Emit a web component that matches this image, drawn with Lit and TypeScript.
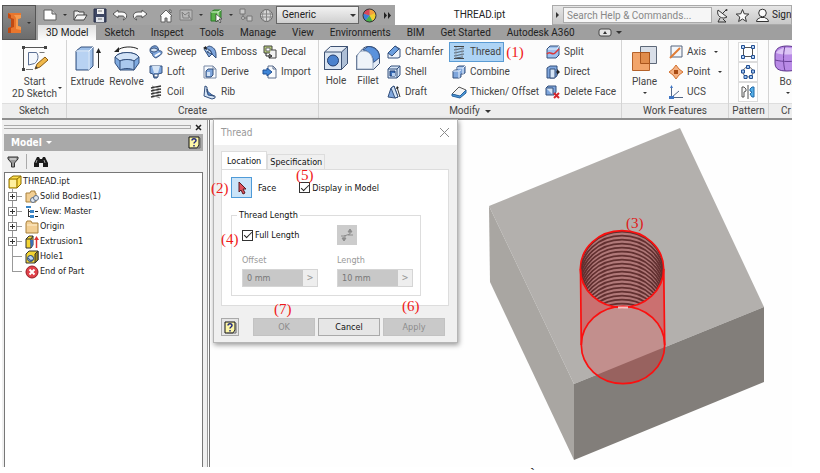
import { LitElement, html, css, svg, nothing } from "lit";
import { customElement, property } from "lit/decorators.js";
import { classMap } from "lit/directives/class-map.js";

const draw = (w: number, h: number, body: unknown) =>
  html`<svg width=${w} height=${h} viewBox="0 0 ${w} ${h}" aria-hidden="true">${body}</svg>`;

const LINE = "#34507c";
const PALE = "#d5e4f5";
const BLUE = "#7fa6dc";

const icons: Record<string, unknown> = {
  logo: draw(16, 22, svg`<path d="M1 1h13v5l-3 1v7l3 1v6H1v-5l3-1V7L1 6z" fill="#e8762d"/><path d="M1 1l3 2v3l3 1v8l-3 1v5H1v-5l3-1V7L1 6z" fill="#c04a12"/><path d="M7 3h7v3l-3 1v7l3 1v3l-5-1V6z" fill="#f59a4d"/>`),
  newDoc: draw(16, 14, svg`<path d="M2 2h8l4 4v6H2z" fill="#fff" stroke="#5c5c5c"/><path d="M10 2v4h4" fill="#ccc" stroke="#5c5c5c"/>`),
  open: draw(16, 14, svg`<path d="M2 12V3h4l1 1h5v3" fill="#eee" stroke="#444"/><path d="M2 12l3-5h10l-3 5z" fill="#f5f5f5" stroke="#444"/>`),
  save: draw(15, 15, svg`<path d="M1 1h12v13H1z" fill="#3e4763" stroke="#29304a"/><path d="M4 1h7v5H4z" fill="#f2f2f2"/><path d="M3 9h8v5H3z" fill="#dfe3ea"/><path d="M5 3h4M5 11h4" stroke="#777"/>`),
  undo: draw(16, 14, svg`<path d="M6 2L1 6l5 4V8h4c3 0 3 2 1 4 5-1 5-8-1-8H6z" fill="#fafafa" stroke="#555"/>`),
  redo: draw(16, 14, svg`<path d="M10 2l5 4-5 4V8H6c-3 0-3 2-1 4-5-1-5-8 1-8h4z" fill="#fafafa" stroke="#555"/>`),
  home: draw(16, 15, svg`<path d="M2 8l6-6 6 6h-1v6H9v-4H7v4H3V8z" fill="#fbfbfb" stroke="#606060"/><path d="M11 2h2v3l-2-2z" fill="#fff" stroke="#606060"/>`),
  material: draw(15, 14, svg`<path d="M1 2h12v10H1z" fill="#b9b9b9" stroke="#7e7e7e"/><path d="M3 4l3 3 4-3v6H4zM9 7l4 5" fill="none" stroke="#808080"/>`),
  select: draw(15, 15, svg`<path d="M2 4l3-2h7v8l-3 3H2z" fill="#58b048" stroke="#2b7a28"/><path d="M2 4h7v9M9 4l3-2" fill="none" stroke="#d6f2cf"/><path d="M7 6v8l2-2 2 3 1-1-2-3h3z" fill="#fff" stroke="#333" stroke-width=".7"/>`),
  nodes: draw(14, 14, svg`<path d="M4 4v6h5" fill="none" stroke="#777"/><g fill="#c8c8c8" stroke="#777"><path d="M1 1h5v5H1zM8 8h5v5H8z"/><circle cx="4" cy="10" r="1.5"/></g>`),
  sphere: draw(15, 15, svg`<circle cx="7.500" cy="7.500" r="6" fill="#d6d6d6" stroke="#666"/><path d="M2 6h11M2 9h11M5 2c-2 4-2 7 0 11M10 2c2 4 2 7 0 11M7.500 2v11" fill="none" stroke="#888"/>`),
  wheel: draw(15, 15, svg`<path d="M7.500 7.500V1a6.500 6.500 0 0 1 6 5z" fill="#f3a13a"/><path d="M7.500 7.500L13.500 5a6.500 6.500 0 0 1-3 8z" fill="#f0d030"/><path d="M7.500 7.500l3 6a6.500 6.500 0 0 1-7-1z" fill="#46b04a"/><path d="M7.500 7.500l-4 5a6.500 6.500 0 0 1-2-7z" fill="#3b7fd9"/><path d="M7.500 7.500L1.500 5.500A6.500 6.500 0 0 1 7.500 1z" fill="#d8455b"/><circle cx="7.500" cy="7.500" r="6.500" fill="none" stroke="#333"/>`),
  more: draw(9, 7, svg`<path d="M1 0l3 3.500L1 7zM5 0l3 3.500L5 7z" fill="#222"/>`),
  dish: draw(15, 15, svg`<path d="M3 2c-2 6 4 10 9 7z" fill="#eee" stroke="#333"/><path d="M7 6l4-4M5 10l-2 4h8l-3-3" fill="none" stroke="#333"/><circle cx="11.500" cy="2" r="1" fill="#333"/>`),
  star: draw(15, 15, svg`<path d="M7.500 1.500l1.700 4.300 4.600.3-3.600 2.900 1.200 4.500-3.900-2.500-3.900 2.500 1.200-4.500L1.200 6.100l4.600-.3z" fill="#fafafa" stroke="#333"/>`),
  person: draw(15, 15, svg`<path d="M1.500 13.500c0-3 3-3 4-4h4c1 1 4 1 4 4z" fill="#fafafa" stroke="#333"/><circle cx="7.500" cy="5" r="3.800" fill="#fafafa" stroke="#333"/>`),
  badge: draw(14, 9, svg`<rect x="1" y="1" width="12" height="7" rx="2" fill="#e6e6e6" stroke="#444"/><path d="M5 6l2-3 2 3z" fill="#333"/>`),

  sketch: draw(27, 27, svg`<path d="M2.500 2v22M2 2.500h22" stroke="#555"/><path d="M7.500 7.500h8c3 4 1 9-2 11l-6 1.500z" fill="#f5f8fc" stroke="#5b6f93"/><path d="M18.500 7.500h5M5 24.500h7" stroke="#777"/><g fill="#444"><path d="M1 1h3v3H1zM23 1h3v3h-3zM1 23h3v3H1z"/></g><path d="M14 24l2-5 8-7 3 3-8 7z" fill="#f0b84a" stroke="#8a5c14"/><path d="M14 24l1-3 2 2z" fill="#444"/>`),
  extrude: draw(28, 27, svg`<path d="M2 6l5-4h12v19l-4 4H2z" fill="#9dbfe9" stroke="${LINE}"/><path d="M2 6h13l4-4M15 6v19" fill="none" stroke="#f3f8fd"/><path d="M3 7h11v17H3z" fill="#b8d2f2"/><path d="M24.500 5v18" stroke="#333"/><path d="M22 8l2.500-5L27 8z" fill="#222"/>`),
  revolve: draw(28, 27, svg`<path d="M2 12c4-6 20-6 24 0v6l-5 7H7l-5-7z" fill="#7faae0" stroke="${LINE}"/><path d="M2 12c4-6 20-6 24 0l-5 4c-4-2-10-2-14 0z" fill="#d2e3f7" stroke="${LINE}"/><path d="M7 16c4-2 10-2 14 0v9c-4-2-10-2-14 0z" fill="#a9c8ee" stroke="${LINE}"/><path d="M4 6C8 1 20 1 25 4" fill="none" stroke="#222"/><path d="M1 7l5-5v5z" fill="#222"/>`),
  sweep: draw(16, 16, svg`<path d="M2 6c0-4 7-6 8-2l1 3c4-1 4 3 0 5l-3 2c-3-1-4-3-3-4-2 0-3-2-3-4z" fill="${BLUE}" stroke="${LINE}"/><ellipse cx="6" cy="6" rx="3.500" ry="2" fill="${PALE}" stroke="${LINE}"/><path d="M7 12l5-3" stroke="#fff" stroke-width="2"/>`),
  loft: draw(16, 16, svg`<path d="M2 2h12v7l-4 1-1 4H6L5 10 2 9z" fill="${BLUE}" stroke="${LINE}"/><path d="M4 2h8l-2 7H6z" fill="${PALE}"/><path d="M6 10h4v3H6z" fill="#fff" stroke="${LINE}"/>`),
  coil: draw(16, 16, svg`<path d="M3 4l10-2M3 7l10-2M3 10l10-2M3 13l10-2" stroke="#333" stroke-width="1.500"/><path d="M4 2l8 3M4 5l8 3M4 8l8 3M4 11l8 3" stroke="#888"/>`),
  emboss: draw(16, 16, svg`<path d="M2 5l5-3c5 1 7 4 7 9v3l-4-4-3 3z" fill="${BLUE}" stroke="${LINE}"/><path d="M2 5c4-1 7 1 8 5M5 8l3-2 2 4z" fill="${PALE}" stroke="${LINE}"/><path d="M1 4l3-2 1 4z" fill="#222"/>`),
  derive: draw(16, 16, svg`<path d="M2 2h9l3 3v9H2z" fill="#f6f9fd" stroke="#7889a5"/><path d="M4 7l2-2h5v6l-2 2H4z" fill="${BLUE}" stroke="${LINE}"/><path d="M5 8h3v4H5z" fill="${PALE}"/><path d="M11 2v3h3" fill="none" stroke="#7889a5"/>`),
  rib: draw(16, 16, svg`<path d="M3 2l2 1v5c1 3 4 3 8 4v2L10 15 2 12z" fill="${PALE}" stroke="${LINE}"/><path d="M5 5c1 4 4 5 7 7l-6-1z" fill="#4f86cf" stroke="${LINE}"/>`),
  decal: draw(16, 16, svg`<path d="M2 2h8v7H2z" fill="#b9d078" stroke="#444"/><path d="M4 4h4v3H4z" fill="#fff" stroke="#666"/><path d="M9 6h5v8H7v-3" fill="#f2f2f2" stroke="#444"/><path d="M4 9v3h5M7 10l3 2-3 2" fill="none" stroke="#222"/>`),
  import: draw(16, 16, svg`<path d="M6 2h5l3 3v9H6z" fill="#f8fafc" stroke="#5d6f8e"/><path d="M11 2v3h3" fill="none" stroke="#5d6f8e"/><path d="M1 6h4V4l5 4-5 4v-2H1z" fill="#3f86d8" stroke="#1f4f93"/>`),
  hole: draw(26, 26, svg`<path d="M1.500 7l6-5.500h17v17l-6 6h-17z" fill="#e7edf5" stroke="#3e5273"/><path d="M18.500 7l6-5.500v17l-6 6z" fill="#aebfd6" stroke="#3e5273"/><path d="M1.500 7h17v17.500h-17z" fill="#d9e4f1" stroke="#3e5273"/><circle cx="10" cy="15.500" r="5.500" fill="#4b82cd" stroke="#243f70"/><path d="M7 12a5.500 5.500 0 0 0 8 6 5.500 5.500 0 0 1-8-6z" fill="#fff"/>`),
  fillet: draw(26, 26, svg`<path d="M1.500 11l6-7c2-2 4-2.500 6-2.500 7 0 11 4 11 11v6l-6 6h-17z" fill="#e3eaf4" stroke="#3e5273"/><path d="M8 5l5-3.500c7 0 11.500 5 11.500 11l-6 5C18.500 11 14 6 8 5z" fill="#5a92dc" stroke="#2d4c80"/><path d="M2 24V12c1-4 3-6 6-6 7 0 10 5 10 13v5z" fill="#eef3f9" stroke="#9aabc4"/>`),
  chamfer: draw(16, 16, svg`<path d="M2 9l7-7 5 3v8l-2 1H2z" fill="#edf2f9" stroke="${LINE}"/><path d="M2 9l7-7 4 3-7 7z" fill="#6b9ede" stroke="${LINE}"/>`),
  shell: draw(16, 16, svg`<path d="M2 5l3-3h9v9l-3 3H2z" fill="${PALE}" stroke="${LINE}"/><path d="M2 5h9v9M11 5l3-3" fill="none" stroke="${LINE}"/><path d="M4 7h5v5H4z" fill="#3f73bd" stroke="#203f74"/><path d="M6 9h3v3H6z" fill="#b7d0f0"/>`),
  draft: draw(16, 16, svg`<path d="M2 13l3-9 3-2 4 11-3 1z" fill="${BLUE}" stroke="${LINE}"/><path d="M5 4l3-2 4 11-3 1z" fill="${PALE}" stroke="${LINE}"/><path d="M11 3l3 10" stroke="#333"/><path d="M10 5l1-3 2 2z" fill="#222"/>`),
  thread: draw(16, 16, svg`<path d="M3 2.500h10M3 14.500h10" stroke="#444"/><path d="M3 6l10-2M3 9l10-2M3 12l10-2M4 14l8-1" stroke="#51606f"/><path d="M5 3v11M11 3v11" stroke="#8d99a6"/>`),
  combine: draw(16, 16, svg`<path d="M6 3l2-1h6v7l-2 1h-2v3l-2 1H2V7l2-1h2z" fill="${BLUE}" stroke="${LINE}"/><path d="M2 7h6v7M6 4h6v6M12 4l2-2M8 7l2-1" fill="none" stroke="#e9f2fd"/>`),
  thicken: draw(16, 16, svg`<path d="M1 10l7-7 7 3-6 7z" fill="#f4f4f4" stroke="#555"/><path d="M1 10l8 2 6-6v3l-6 5-8-2z" fill="#4e9bdb" stroke="#27619c"/>`),
  split: draw(16, 16, svg`<path d="M2 5l3-3h9v9l-3 3H2z" fill="#9cc0ee" stroke="${LINE}"/><path d="M3 5h9l2-3" fill="none" stroke="#eef5fd"/><path d="M2 10c3-4 5 2 8-1l4-4" fill="none" stroke="#d9383a" stroke-width="1.500"/>`),
  direct: draw(16, 16, svg`<path d="M2 4l3-2h7v10l-3 2H2z" fill="${BLUE}" stroke="${LINE}"/><path d="M5 5h5v9H5z" fill="${PALE}" stroke="${LINE}"/><path d="M11 8h2" stroke="#222"/><path d="M12 5l3 3-3 3z" fill="#222"/>`),
  deleteFace: draw(16, 16, svg`<path d="M1 4l2-2h8v6l-2 3H1z" fill="${BLUE}" stroke="${LINE}"/><path d="M1 4h7v7" fill="${PALE}" stroke="${LINE}"/><path d="M9 9l5 5M14 9l-5 5" stroke="#d7262b" stroke-width="2"/>`),
  plane: draw(27, 27, svg`<path d="M9.500 1.500h16v17h-16z" fill="#d9dfe8" stroke="#5d6878"/><path d="M1.500 7.500h17v18h-17z" fill="#f2a56b" stroke="#b5622a"/><path d="M9.500 7.500h9v11h-9z" fill="#e08c4c" stroke="#a8541c"/>`),
  axis: draw(16, 16, svg`<path d="M3 2h11v11H3z" fill="#f3f6fa" stroke="#55657e"/><path d="M2 14L12 4" stroke="#e07b34" stroke-width="2"/>`),
  point: draw(16, 16, svg`<path d="M8 1l3 4 4 3-4 3-3 4-3-4-4-3 4-3z" fill="#f4b183" stroke="#d3712f"/><path d="M6 6h4v4H6z" fill="#a94a12"/>`),
  ucs: draw(16, 16, svg`<path d="M3.500 2v11.500H15M4 13l7-6" fill="none" stroke="#546887"/><path d="M2 4l1.500-3L5 4zM1 12h5v3H1z" fill="#3f75c4"/>`),
  rect: draw(16, 16, svg`<path d="M3.500 3.500h9v9h-9z" fill="none" stroke="#555"/><g fill="#b9d5f5" stroke="#234f93"><path d="M1.500 1.500h3v3h-3zM11.500 1.500h3v3h-3zM1.500 11.500h3v3h-3zM11.500 11.500h3v3h-3z"/></g>`),
  circ: draw(16, 16, svg`<circle cx="8" cy="8" r="5" fill="none" stroke="#666"/><g fill="#9dc3f0" stroke="#234f93"><path d="M6.500 1.500h3v3h-3zM1.500 6h3v3h-3zM11.500 6h3v3h-3zM4 11.500h3v3H4zM9.500 11.500h3v3h-3z"/></g>`),
  mirror: draw(16, 16, svg`<path d="M8 1v14" stroke="#555"/><path d="M2 3h2l2 2v2l-2 1v5H2z" fill="#f4f4f4" stroke="#555"/><path d="M14 3h-2l-2 2v2l2 1-2 2 2 3h2z" fill="#55aee6" stroke="#2069a8"/>`),
  box: draw(28, 27, svg`<path d="M1 10c0-6 4-9 12-9s14 3 14 9v8c0 6-6 8-14 8S1 24 1 18z" fill="#b98ae6" stroke="#5d348c"/><path d="M2 8c3-6 17-8 23 0-8 2-16 2-23 0z" fill="#dcc3f5"/><path d="M1 15c8 2 18 2 26 0M11 1c-2 8-2 17 0 25M20 2v23" fill="none" stroke="#6b4199"/>`),

  part: draw(14, 14, svg`<path d="M1 4l4-3h8v8l-4 4H1z" fill="#ffe04d" stroke="#8a6a00"/><path d="M1 4h8v9M9 4l4-3" fill="none" stroke="#8a6a00"/><path d="M2 5h6v7H2z" fill="#fff0a0"/>`),
  bodies: draw(14, 14, svg`<path d="M1 3h4l1-2h4v2h1v9H1z" fill="#f2cf94" stroke="#a9813c"/><circle cx="8" cy="10" r="2.500" fill="#dfe6ef" stroke="#5f6f86"/><circle cx="11" cy="8" r="2.500" fill="#dfe6ef" stroke="#5f6f86"/>`),
  view: draw(14, 14, svg`<path d="M3.500 4v8M3 6.500h2M3 11.500h2" fill="none" stroke="#333"/><path d="M1 1h5v2H1zM5 5h4v3H5zM5 10h4v3H5z" fill="#3a86c8"/><path d="M10 6.500h3M10 11.500h3" stroke="#222"/>`),
  folder: draw(14, 14, svg`<path d="M1 3l1-2h4l1 2h6v10H1z" fill="#f2cf94" stroke="#a9813c"/><path d="M2 5h10" stroke="#fff0cf"/>`),
  extrusion: draw(14, 14, svg`<path d="M1 4l3-3h4v9l-2 3H1z" fill="#f3d433" stroke="#333"/><path d="M1 4h5v9M6 4l2-3" fill="none" stroke="#333"/><path d="M5 5h3v5l-2 3z" fill="#3d6fb5"/><path d="M11.500 13V4" stroke="#d33" stroke-width="1.500"/><path d="M9 5l2.500-4L14 5z" fill="#d33"/>`),
  holeFeat: draw(14, 14, svg`<path d="M1 4l3-3h9v9l-3 3H1z" fill="#f3d433" stroke="#333"/><path d="M10 4l3-3v9l-3 3z" fill="#a08a1a" stroke="#333"/><circle cx="5.500" cy="8.500" r="3" fill="#b9d5f5" stroke="#1c3c70"/><path d="M3.500 8a3 3 0 0 0 4 2" stroke="#1c3c70" fill="none"/>`),
  end: draw(14, 14, svg`<circle cx="7" cy="7" r="6" fill="#e0414a" stroke="#9a1a22"/><path d="M4.500 4.500l5 5M9.500 4.500l-5 5" stroke="#fff" stroke-width="2"/>`),
  filter: draw(14, 14, svg`<path d="M2 2h10v2L8.500 8v4h-3V8L2 4z" fill="#999" stroke="#333"/><path d="M4 4h6" stroke="#eee"/>`),
  binoculars: draw(16, 14, svg`<path d="M4 2h2l1 2h2l1-2h2l3 6v4h-5V8H6v4H1V8z" fill="#1c1c1c"/><path d="M4 5L3 8M11 5l1 3" stroke="#999"/>`),
  help: draw(13, 13, svg`<path d="M1 1h10v8l-2 3H1z" fill="#fdf7a8" stroke="#111"/><path d="M12 2v10H3" fill="none" stroke="#666"/><path d="M4 4.500C4 2 8 2 8 4.500 8 6 6 6 6 7.500M6 9v1.500" fill="none" stroke="#222a80" stroke-width="1.500"/>`),
  arrow: draw(12, 14, svg`<path d="M3 1v10l2-2 2 4 2-1-2-4h3z" fill="#e0525c" stroke="#5a1a20"/>`),
  flip: draw(16, 16, svg`<path d="M2 9h5M5 10v3M3 11l2 3 2-3zM9 8h5M11 7V3M9 5l2-3 2 3z" fill="#8c8c8c" stroke="#8c8c8c"/><path d="M5 9l6-2" stroke="#8c8c8c"/>`),
  close: draw(11, 11, svg`<path d="M1 1l9 9M10 1l-9 9" stroke="#8c8c8c"/>`),
  smallClose: draw(7, 7, svg`<path d="M1 1l5 5M6 1L1 6" stroke="#222" stroke-width="1.500"/>`),
};

const shared = css`
  * { box-sizing: border-box; }
  svg { display: block; flex: none; }
  button, select, input { font: inherit; color: inherit; margin: 0; }
  button { border: 0; padding: 0; background: none; white-space: nowrap; }
  .note { position: absolute; font: 15px/16px "Liberation Serif", serif; color: #f01818; white-space: nowrap; z-index: 2; }
  .caret { width: 0; height: 0; flex: none; border: 3px solid transparent; border-top-color: #333; border-bottom: 0; }
`;

type Tool = { icon: string; label: string; caret?: boolean; active?: boolean; note?: string };
const t = (icon: string, label: string, extra: Partial<Tool> = {}): Tool => ({ icon, label, ...extra });

const PANELS: { key: string; title: string; big: Tool[]; cols: Tool[][]; more?: boolean }[] = [
  { key: "sketch", title: "Sketch", big: [t("sketch", "Start\n2D Sketch", { caret: true })], cols: [] },
  {
    key: "create", title: "Create",
    big: [t("extrude", "Extrude"), t("revolve", "Revolve")],
    cols: [
      [t("sweep", "Sweep"), t("loft", "Loft"), t("coil", "Coil")],
      [t("emboss", "Emboss"), t("derive", "Derive"), t("rib", "Rib")],
      [t("decal", "Decal"), t("import", "Import")],
    ],
  },
  {
    key: "modify", title: "Modify", more: true,
    big: [t("hole", "Hole"), t("fillet", "Fillet")],
    cols: [
      [t("chamfer", "Chamfer"), t("shell", "Shell"), t("draft", "Draft")],
      [t("thread", "Thread", { active: true, note: "(1)" }), t("combine", "Combine"), t("thicken", "Thicken/ Offset")],
      [t("split", "Split"), t("direct", "Direct"), t("deleteFace", "Delete Face")],
    ],
  },
  {
    key: "work", title: "Work Features",
    big: [t("plane", "Plane", { caret: true })],
    cols: [[t("axis", "Axis", { caret: true }), t("point", "Point", { caret: true }), t("ucs", "UCS")]],
  },
  { key: "pattern", title: "Pattern", big: [], cols: [[t("rect", ""), t("circ", ""), t("mirror", "")]] },
  { key: "freeform", title: "Cr", big: [t("box", "Box", { caret: true })], cols: [] },
];

@customElement("cad-ribbon")
class CadRibbon extends LitElement {
  static styles = [shared, css`
    :host { display: flex; background: #fcfcfc; border-bottom: 2px solid #8f8f8f; font: 10px/12px Roboto, sans-serif; color: #444; overflow: hidden; }
    .panel { display: flex; flex-direction: column; flex: none; border-right: 1px solid #d4d4d4; }
    .tools { display: grid; flex: 1; grid-template-rows: 63px; padding-left: 1px; }
    .sketch { width: 65px; }
    .create { width: 252px; }
    .create .tools { grid-template-columns: 39px 39px 54px 60px 1fr; }
    .modify { width: 303px; }
    .modify .tools { grid-template-columns: 32px 32px 65px 94px 1fr; }
    .work { width: 107px; }
    .work .tools { grid-template-columns: 43px 1fr; }
    .pattern { width: 40px; }
    .freeform { flex: 1 0 0; min-width: 0; overflow: hidden; border: 0; }
    .freeform .tools { grid-template-columns: 38px; padding-left: 0; }
    .freeform .title { justify-content: flex-start; padding-left: 12px; }
    .big { display: flex; flex-direction: column; align-items: center; gap: 4px; padding-top: 5px; position: relative; }
    .big .label { white-space: pre-line; }
    .big .caret { border-width: 2px; border-bottom: 0; }
    .sketch .big .caret { position: absolute; right: 4px; top: 47px; }
    .col { display: flex; flex-direction: column; align-items: flex-start; padding-top: 2px; }
    .small { display: flex; align-items: center; gap: 3px; height: 20px; padding: 0 3px 0 2px; position: relative; }
    .small .caret { margin-left: 5px; border-width: 2px; border-bottom: 0; }
    .active { background: #aed4f5; box-shadow: inset 0 0 0 1px #5a9bd3; }
    .pattern .col { padding-left: 8px; }
    .pattern .small { padding: 0 1px; border: 1px solid #dcdcdc; background: #fff; }
    .title { display: flex; align-items: center; justify-content: center; gap: 5px; height: 15px; background: #eee; border-top: 1px solid #dedede; white-space: nowrap; }
    .note { left: calc(100% + 2px); top: 2px; }
  `];

  render() {
    return PANELS.map((p) => html`
      <section class="panel ${p.key}">
        <div class="tools">
          ${p.big.map((b) => html`<button class="big">${icons[b.icon]}<span class="label">${b.label}</span>${b.caret ? html`<i class="caret"></i>` : nothing}</button>`)}
          ${p.cols.map((c) => html`<div class="col">${c.map((s) => html`
            <button class=${classMap({ small: true, active: !!s.active })} aria-label=${s.label || s.icon}>
              ${icons[s.icon]}${s.label ? html`<span>${s.label}</span>` : nothing}
              ${s.caret ? html`<i class="caret"></i>` : nothing}
              ${s.note ? html`<span class="note">${s.note}</span>` : nothing}
            </button>`)}</div>`)}
        </div>
        <div class="title">${p.title}${p.more ? html`<i class="caret"></i>` : nothing}</div>
      </section>`);
  }
}

@customElement("cad-header")
class CadHeader extends LitElement {
  static styles = [shared, css`
    :host { display: grid; grid-template-columns: 36px 1fr; font: 10px/12px Roboto, sans-serif; color: #222; background: #9f9f9f; }
    .app { display: flex; align-items: center; justify-content: center; gap: 4px; background: linear-gradient(#8f8f8f, #6c6c6c); border: 1px solid #555; width: 34px; }
    .rows { min-width: 0; }
    .top { display: flex; height: 20px; background: #fff; }
    .quick { display: flex; align-items: center; background: #a3a3a3; width: 357px; padding-left: 2px; flex: none; }
    .qb { width: 20px; height: 20px; display: flex; align-items: center; justify-content: center; flex: none; }
    .drop { width: 10px; display: flex; justify-content: center; flex: none; }
    .drop .caret, .app .caret { border-width: 2px; border-bottom: 0; }
    .gap { width: 6px; }
    .picker { position: relative; display: flex; align-items: center; width: 83px; height: 18px; flex: none; }
    .picker select { appearance: none; width: 100%; height: 18px; padding: 0 5px; border: 1px solid #666; border-radius: 0; background: linear-gradient(#f2f2f2, #cfcfcf); }
    .picker .caret { position: absolute; right: 3px; top: 8px; }
    .more { padding-left: 4px; }
    .name { flex: 1; display: flex; align-items: center; justify-content: center; padding-left: 12px; }
    .search { display: flex; align-items: center; width: 240px; flex: none; background: linear-gradient(#e6e6e6, #c8c8c8); border: 1px solid #aaa; overflow: hidden; }
    .play { border: 3px solid transparent; border-left-color: #333; border-right: 0; margin: 0 4px 0 3px; }
    .search input { width: 149px; height: 16px; padding: 0 3px; border: 1px solid #aaa; background: #f6f6f6; flex: none; }
    .search input::placeholder { color: #888; opacity: 1; }
    .sign { white-space: nowrap; }
    .tabs { display: flex; align-items: center; height: 15px; overflow: hidden; }
    .tab { height: 15px; padding: 0 8px; }
    .on { background: linear-gradient(#e0e0e0, #fcfcfc); }
    .badge { padding: 0 4px 0 15px; }
  `];

  render() {
    const q = (n: string, label: string) => html`<button class="qb" aria-label=${label}>${icons[n]}</button>`;
    const d = html`<span class="drop"><i class="caret"></i></span>`;
    const tabs = ["3D Model", "Sketch", "Inspect", "Tools", "Manage", "View", "Environments", "BIM", "Get Started", "Autodesk A360"];
    return html`
      <button class="app" aria-label="Application menu">${icons.logo}<i class="caret"></i></button>
      <div class="rows">
        <div class="top">
          <div class="quick">
            ${q("newDoc", "New")}${d}${q("open", "Open")}${q("save", "Save")}${q("undo", "Undo")}${q("redo", "Redo")}
            <span class="gap"></span>${q("home", "Home")}${q("material", "Material")}${d}${q("select", "Select")}${d}${q("nodes", "Update")}${q("sphere", "Appearance")}
            <label class="picker"><select aria-label="Appearance"><option>Generic</option></select><i class="caret"></i></label>
            ${q("wheel", "Colours")}<button class="more" aria-label="More tools">${icons.more}</button>
          </div>
          <div class="name">THREAD.ipt</div>
          <div class="search">
            <i class="play"></i><input placeholder="Search Help &amp; Commands..." aria-label="Search" />
            ${q("dish", "Subscription")}${q("star", "Favourites")}${q("person", "Account")}<span class="sign">Sign</span>
          </div>
        </div>
        <nav class="tabs">
          ${tabs.map((x, i) => html`<button class=${classMap({ tab: true, on: i === 0 })}>${x}</button>`)}
          <span class="badge">${icons.badge}</span><i class="caret"></i>
        </nav>
      </div>`;
  }
}

@customElement("model-browser")
class ModelBrowser extends LitElement {
  static styles = [shared, css`
    :host { display: flex; flex-direction: column; width: 206px; flex: none; background: #f0f0f0; padding: 0 4px 0 2px; font: 9px/15px "DejaVu Sans Condensed", "Noto Sans", sans-serif; color: #222; border-right: 1px solid #999; }
    .grip { display: flex; align-items: center; gap: 4px; height: 14px; padding-right: 1px; }
    .bar { flex: 1; height: 4px; border: 1px solid #aaa; border-left: 0; }
    .head { display: flex; align-items: center; justify-content: space-between; height: 17px; padding: 0 2px 0 7px; background: #a9a9a9; color: #fff; font: bold 10px/12px "DejaVu Sans Condensed", sans-serif; }
    .head span { display: flex; align-items: center; gap: 4px; }
    .head .caret { border-top-color: #fff; }
    .bar2 { display: flex; align-items: center; height: 21px; padding-left: 2px; gap: 6px; }
    .sep { width: 1px; height: 15px; background: #aaa; }
    .tree { flex: 1; margin: 0; padding: 1px 0 0 3px; border: 1px solid #777; border-bottom: 0; background: #fff; list-style: none; }
    li { display: flex; align-items: center; height: 15px; gap: 1px; white-space: nowrap; }
    .twig { position: relative; width: 16px; height: 15px; flex: none; display: flex; align-items: center; }
    .twig::before { content: ""; position: absolute; left: 4px; top: 0; width: 1px; height: 15px; background: #999; }
    .twig::after { content: ""; position: absolute; left: 4px; top: 7px; width: 10px; height: 1px; background: #999; }
    .last::before { height: 8px; }
    .plus { position: relative; z-index: 1; width: 9px; height: 9px; border: 1px solid #888; background: linear-gradient(#333, #333) center / 5px 1px no-repeat, linear-gradient(#333, #333) center / 1px 5px no-repeat, #fff; }
  `];

  render() {
    const rows: [string, string, boolean][] = [
      ["bodies", "Solid Bodies(1)", true], ["view", "View: Master", true], ["folder", "Origin", true],
      ["extrusion", "Extrusion1", true], ["holeFeat", "Hole1", false], ["end", "End of Part", false],
    ];
    return html`
      <div class="grip"><span class="bar"></span><button aria-label="Close panel">${icons.smallClose}</button></div>
      <div class="head"><span>Model<i class="caret"></i></span><button aria-label="Help">${icons.help}</button></div>
      <div class="bar2"><button aria-label="Filter">${icons.filter}</button><i class="sep"></i><button aria-label="Find">${icons.binoculars}</button></div>
      <ul class="tree">
        <li>${icons.part}<span>THREAD.ipt</span></li>
        ${rows.map(([icon, label, open], i) => html`<li>
          <span class=${classMap({ twig: true, last: i === rows.length - 1 })}>${open ? html`<button class="plus" aria-label="Expand ${label}"></button>` : nothing}</span>
          ${icons[icon]}<span>${label}</span></li>`)}
      </ul>`;
  }
}

@customElement("thread-dialog")
class ThreadDialog extends LitElement {
  static styles = [shared, css`
    :host { display: block; width: 245px; background: #f0f0f0; border: 1px solid #b5b5b5; box-shadow: 1px 2px 5px #0006; font: 9px/12px "DejaVu Sans Condensed", "Noto Sans", sans-serif; color: #111; }
    .head { display: flex; align-items: center; justify-content: space-between; height: 25px; padding: 0 7px; background: #fff; color: #999; font-size: 10px; }
    .body { padding: 6px 8px 6px 7px; }
    .tabs { display: flex; align-items: flex-end; }
    .tab { height: 15px; padding: 0 2px; border: 1px solid #ddd; border-bottom: 0; }
    .on { height: 18px; background: #fff; padding: 0 5px; }
    .page { background: #fff; border: 1px solid #ddd; padding: 7px 27px 9px 9px; }
    .row { display: flex; align-items: center; position: relative; }
    .pick { display: flex; align-items: center; justify-content: center; width: 21px; height: 21px; border: 1px solid #4f9bd8; background: #cbe4f8; margin-right: 6px; }
    label { display: flex; align-items: center; gap: 2px; white-space: nowrap; }
    .display { margin-left: 23px; }
    input[type="checkbox"] { appearance: none; width: 11px; height: 11px; border: 1px solid #333; background: #fff; display: grid; place-content: center; }
    input[type="checkbox"]::before { content: ""; width: 7px; height: 3px; border: solid #222; border-width: 0 0 1px 1px; transform: rotate(-45deg); margin-top: -2px; }
    fieldset { margin: 11px 0 0; padding: 4px 8px 8px 10px; border: 1px solid #ddd; min-width: 0; position: relative; }
    legend { padding: 0 2px; margin-left: -5px; }
    .cols { display: grid; grid-template-columns: 76px 76px; column-gap: 19px; align-items: center; }
    .dir { display: flex; align-items: center; justify-content: center; width: 20px; height: 20px; background: #ccc; }
    .field { display: flex; flex-direction: column; align-items: stretch; gap: 3px; margin-top: 9px; color: #999; }
    .combo { display: flex; height: 18px; border: 1px solid #d5d5d5; background: #eee; }
    .combo input { width: 60px; min-width: 0; border: 0; padding: 0 4px; background: #c8c8c8; color: #777; border-radius: 0; }
    .combo button { flex: 1; color: #999; font: 10px/12px "DejaVu Sans Mono", monospace; }
    .foot { display: grid; grid-template-columns: 18px 8px 62px 62px 62px; column-gap: 3px; margin-top: 12px; position: relative; }
    .foot button { height: 18px; border: 1px solid #aaa; background: #e6e6e6; display: flex; align-items: center; justify-content: center; }
    .foot .off { background: #c9c9c9; border-color: #c2c2c2; color: #8c8c8c; }
    .n2 { left: -20px; top: 3px; }
    .n5 { left: 65px; top: -10px; }
    .n4 { left: -21px; top: 2px; }
    .n7 { left: 53px; top: -17px; }
    .n6 { left: 181px; top: -20px; }
  `];

  render() {
    const field = (label: string, value: string) => html`
      <label class="field">${label}<span class="combo"><input .value=${value} disabled /><button disabled aria-label="${label} options">&gt;</button></span></label>`;
    return html`
      <div class="head"><span>Thread</span><button aria-label="Close">${icons.close}</button></div>
      <div class="body">
        <div class="tabs"><button class="tab on">Location</button><button class="tab">Specification</button></div>
        <div class="page">
          <div class="row">
            <span class="note n2">(2)</span><span class="note n5">(5)</span>
            <button class="pick" id="face">${icons.arrow}</button><label for="face">Face</label>
            <label class="display"><input type="checkbox" checked />Display in Model</label>
          </div>
          <fieldset>
            <legend>Thread Length</legend>
            <div class="cols">
              <div class="row"><span class="note n4">(4)</span><label><input type="checkbox" checked />Full Length</label></div>
              <button class="dir" disabled aria-label="Flip direction">${icons.flip}</button>
              ${field("Offset", "0 mm")}${field("Length", "10 mm")}
            </div>
          </fieldset>
        </div>
        <div class="foot">
          <button aria-label="Help">${icons.help}</button><span></span>
          <button class="off" disabled>OK</button><button>Cancel</button><button class="off" disabled>Apply</button>
          <span class="note n7">(7)</span><span class="note n6">(6)</span>
        </div>
      </div>`;
  }
}

@customElement("part-view")
class PartView extends LitElement {
  @property({ type: Number }) turns = 19;

  static styles = [shared, css`
    :host { display: block; }
    .mark { font: 15px "Liberation Serif", serif; fill: #e01818; }
  `];

  render() {
    const rings = Array.from({ length: this.turns }, (_, i) => 4 + i * 4);
    return html`<svg width="276" height="334" viewBox="489 127 276 334" role="img" aria-label="Block with threaded hole">
      <path d="M680 128L764 307 574 384 489 206z" fill="#b3b0ad"/>
      <path d="M489 206L574 384V460L490 282z" fill="#a9a6a2"/>
      <path d="M574 384L764 307V382L574 460z" fill="#827e7a"/>
      <clipPath id="bore"><ellipse cx="622" cy="269" rx="41.700" ry="38.300"/></clipPath>
      <clipPath id="floor"><ellipse cx="623" cy="345" rx="41.700" ry="38.600"/></clipPath>
      <path d="M580.500 269V345H664.500V269z" fill="#cb7070"/>
      <g clip-path="url(#floor)">
        <path d="M580 305h86v80h-86z" fill="#c28f8d"/>
        <path d="M574 384L764 307V400H574z" fill="#98625f"/>
      </g>
      <g clip-path="url(#bore)">
        <path d="M579 230h86v78h-86z" fill="#b07878"/>
        ${rings.map((y) => svg`<ellipse cx="622" cy=${y + 266} rx="41.700" ry="38.300" fill="none" stroke="#623030" stroke-width="1.800"/>`)}
      </g>
      <g fill="none" stroke="#fb1010" stroke-width="1.700">
        <ellipse cx="622" cy="269" rx="41.700" ry="38.300"/>
        <ellipse cx="623" cy="345" rx="41.700" ry="38.600"/>
        <path d="M580.500 269L581.300 345M663.700 269L664.700 345"/>
      </g>
      <path d="M618 307.500h10" stroke="#f6c0c0" stroke-width="2"/>
      <text class="mark" x="626" y="228">(3)</text>
    </svg>`;
  }
}

@customElement("app-root")
class AppRoot extends LitElement {
  static styles = [shared, css`
    :host { display: flex; flex-direction: column; box-sizing: border-box; min-height: 100vh; padding: 5px 28px 0 2px; background: #fff; overflow: hidden; }
    .work { display: flex; flex: 1; min-height: 344px; }
    .canvas { flex: 1; position: relative; display: flex; justify-content: flex-end; align-items: flex-start; padding: 7px 27px 0 0; margin-left: 1px; border-left: 1px solid #777; background: #fefefe; }
    .dialog { position: absolute; left: 3px; top: -1px; }
    .caption { height: 6px; overflow: hidden; padding-left: 528px; font: 15px/12px "Liberation Serif", serif; color: #111; }
  `];

  render() {
    return html`
      <cad-header></cad-header>
      <cad-ribbon></cad-ribbon>
      <main class="work">
        <model-browser></model-browser>
        <div class="canvas"><part-view></part-view><thread-dialog class="dialog"></thread-dialog></div>
      </main>
      <footer class="caption">\`</footer>`;
  }
}
